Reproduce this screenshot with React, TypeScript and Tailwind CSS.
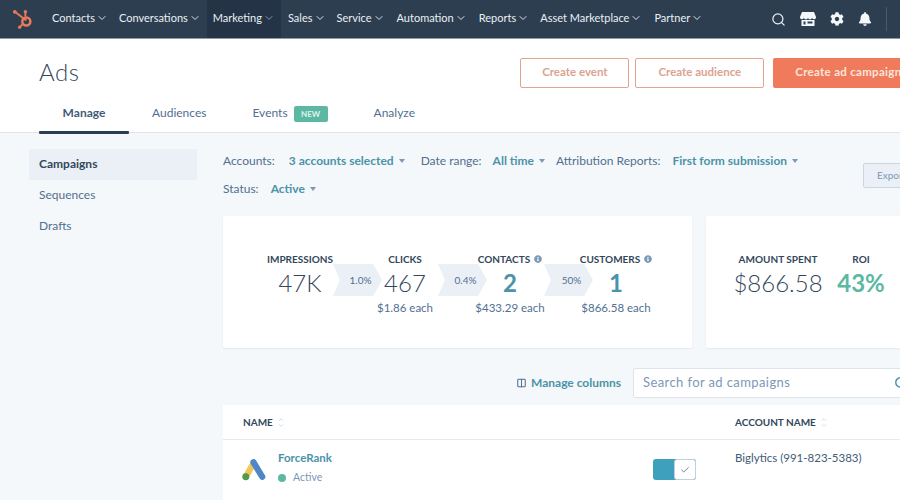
import { ChevronDown, Search, Columns2, Check, ChevronUp } from "lucide-react";
import { FaCog, FaBell, FaInfoCircle } from "react-icons/fa";

const navItems = [
  { label: "Contacts", cls: "pl-[14px]" },
  { label: "Conversations", cls: "pl-[11px]" },
  { label: "Marketing", cls: "ml-[6px] px-[6px] bg-[#243345]", active: true },
  { label: "Sales", cls: "ml-[7px]" },
  { label: "Service", cls: "ml-[11px]" },
  { label: "Automation", cls: "ml-[12px]" },
  { label: "Reports", cls: "ml-[12px]" },
  { label: "Asset Marketplace", cls: "ml-[11px]" },
  { label: "Partner", cls: "ml-[12px]" },
];

function Caret() {
  return <span className="ml-[5px] inline-block border-x-[3.5px] border-t-[4px] border-x-transparent border-t-[#7c98b6]" />;
}

function Filter({ label, value, gap, left }: { label: string; value: string; gap: string; left: string }) {
  return (
    <div className={`flex items-center ${left}`}>
      <span className="text-[#516f90]">{label}</span>
      <span className={`${gap} font-bold text-[#4a93a8]`}>{value}</span>
      <Caret />
    </div>
  );
}

function Metric({ label, value, sub, info, width, tone }: { label: string; value: string; sub?: string; info?: boolean; width: string; tone?: string }) {
  return (
    <div className={`flex flex-col items-center whitespace-nowrap ${width}`}>
      <div className="flex h-[14px] items-center gap-[4px] text-[10px] font-bold text-[#33475b]">
        {label}
        {info && <FaInfoCircle className="h-[8px] w-[8px] text-[#7c98b6]" />}
      </div>
      <div className={`mt-[2px] h-[30px] text-[24px] leading-[30px] ${tone ?? "font-light text-[#33475b]"}`}>{value}</div>
      {sub && <div className="mt-[2px] text-[11.5px] leading-[16px] text-[#516f90]">{sub}</div>}
    </div>
  );
}

function Arrow({ pct, ml }: { pct: string; ml?: string }) {
  return (
    <div className={`mt-[12px] flex h-[32px] w-[49px] shrink-0 items-center justify-center bg-[#eaf0f6] pl-[6px] text-[10px] text-[#516f90] [clip-path:polygon(0_0,82%_0,100%_50%,82%_100%,0_100%,14%_50%)] ${ml ?? ""}`}>
      {pct}
    </div>
  );
}

function SortIcon() {
  return (
    <span className="ml-[4px] flex flex-col text-[#cbd6e2]">
      <ChevronUp className="-mb-[1px] h-[7px] w-[8px]" strokeWidth={3} />
      <ChevronUp className="h-[7px] w-[8px] rotate-180" strokeWidth={3} />
    </span>
  );
}

export default function App() {
  return (
    <div className="flex h-[500px] w-[900px] flex-col overflow-hidden bg-[#f5f8fa] font-['Lato',sans-serif]">
      {/* Top nav */}
      <nav className="flex h-[39px] shrink-0 items-stretch border-b border-[#8b99a8] bg-[#2d3e50] text-[11px] text-[#eaf0f6]">
        <div className="flex w-[38px] shrink-0 items-center pl-[11px]">
          <svg viewBox="0 0 24 24" className="h-[23px] w-[23px]" fill="none">
            <g stroke="#e8795a" strokeWidth="2">
              <path d="M4 4 L16 13" />
              <path d="M15 5 L15 9" />
              <path d="M10 19 L13 16" />
            </g>
            <circle cx="4" cy="4" r="2" fill="#e8795a" />
            <circle cx="15" cy="4" r="1.8" fill="#e8795a" />
            <circle cx="9" cy="20" r="1.7" fill="#e8795a" />
            <circle cx="16" cy="14" r="4.2" stroke="#e8795a" strokeWidth="2.6" />
          </svg>
        </div>
        {navItems.map((item) => (
          <div key={item.label} className={`flex items-center whitespace-nowrap pb-[2px] ${item.cls}`}>
            {item.label}
            <ChevronDown className={`ml-[1px] h-[12px] w-[12px] ${item.active ? "text-[#7c98b6]" : "text-[#dfe3eb]"}`} />
          </div>
        ))}
        <div className="ml-auto flex items-center gap-[14px] pr-[13px]">
          <Search className="h-[15px] w-[15px] text-[#eaf0f6]" strokeWidth={2} />
          <svg viewBox="0 0 16 16" className="h-[16px] w-[16px]" fill="#f5f8fa">
            <path d="M2 1h12l2 5a2 2 0 0 1-4 .4A2 2 0 0 1 8 6.4 2 2 0 0 1 4 6.4 2 2 0 0 1 0 6z" />
            <path fillRule="evenodd" d="M1.5 9h13v6h-13zM3.5 10.5v3h2v-3zM7.5 10.5v2h5v-2z" />
          </svg>
          <FaCog className="h-[14px] w-[14px] text-[#f5f8fa]" />
          <FaBell className="h-[14px] w-[14px] text-[#f5f8fa]" />
          <div className="h-[24px] w-px bg-[#425b76]" />
        </div>
      </nav>

      {/* Page header */}
      <header className="h-[94px] shrink-0 border-b border-[#dfe3eb] bg-white">
        <div className="mt-[19px] flex h-[30px] items-start pl-[39px]">
          <h1 className="-mt-[1px] text-[24px] font-light leading-[30px] tracking-[0.5px] text-[#33475b]">Ads</h1>
          <div className="ml-[441px] flex shrink-0 text-[11.5px] font-bold">
            <button className="h-[30px] w-[109px] rounded-[2px] border border-[#e2a48f] bg-white pb-[2px] text-[#dba391]">Create event</button>
            <button className="ml-[6px] h-[30px] w-[129px] rounded-[2px] border border-[#e2a48f] bg-white pb-[2px] text-[#dba391]">Create audience</button>
            <button className="ml-[9px] h-[30px] w-[150px] shrink-0 rounded-[2px] bg-[#ef7b5c] pb-[2px] tracking-[0.3px] text-[#fde4da]">Create ad campaign</button>
          </div>
        </div>
        <div className="flex items-stretch pl-[39px] pt-[14px] text-[12px] text-[#516f90]">
          <div className="relative h-[32px] w-[90px] pt-[2px] text-center font-bold text-[#425b76]">
            Manage
            <div className="absolute bottom-0 left-0 h-[3px] w-full rounded-[1px] bg-[#2d3e50]" />
          </div>
          <div className="ml-[23px] pt-[2px]">Audiences</div>
          <div className="ml-[46px] pt-[2px]">Events</div>
          <div className="ml-[6px] mt-[4px] flex h-[16px] w-[34px] items-center justify-center rounded-[2px] bg-[#5cb8a3] text-[8px] font-bold text-[#dff3ee]">NEW</div>
          <div className="ml-[46px] pt-[2px]">Analyze</div>
        </div>
      </header>

      <div className="flex min-h-0 flex-1">
        {/* Side menu */}
        <aside className="w-[223px] shrink-0 pl-[29px] pt-[16px] text-[12px] text-[#516f90]">
          <div className="flex h-[31px] w-[168px] items-center bg-[#eaf0f6] pb-[2px] pl-[10px] font-bold text-[#33475b]">Campaigns</div>
          <div className="flex h-[31px] items-center pb-[2px] pl-[10px]">Sequences</div>
          <div className="flex h-[31px] items-center pb-[2px] pl-[10px]">Drafts</div>
        </aside>

        <main className="w-[760px] shrink-0">
          <div className="flex items-start">
            <div className="w-[640px] shrink-0 text-[12px]">
              <div className="flex h-[37px] items-end">
                <Filter label="Accounts:" value="3 accounts selected" gap="ml-[14px]" left="" />
                <Filter label="Date range:" value="All time" gap="ml-[11px]" left="ml-[16px]" />
                <Filter label="Attribution Reports:" value="First form submission" gap="ml-[12px]" left="ml-[11px]" />
              </div>
              <div className="mt-[11px] flex h-[16px] items-center">
                <Filter label="Status:" value="Active" gap="ml-[12px]" left="" />
              </div>
            </div>
            <div className="mt-[30px] flex h-[25px] w-[60px] shrink-0 items-center rounded-[2px] border border-[#cbd6e2] bg-[#eaf0f6] pl-[13px] text-[10px] text-[#7c98b6]">Export</div>
          </div>

          <div className="mt-[19px] flex gap-[14px]">
            <section className="flex h-[132px] w-[469px] shrink-0 items-start rounded-[2px] bg-white pl-[44px] pt-[36px] shadow-[0_1px_2px_rgba(45,62,80,0.08)]">
              <Metric label="IMPRESSIONS" value="47K" width="w-[66px]" />
              <Arrow pct="1.0%" />
              <Metric label="CLICKS" value="467" sub="$1.86 each" width="w-[46px]" />
              <Arrow pct="0.4%" ml="ml-[10px]" />
              <Metric label="CONTACTS" value="2" sub="$433.29 each" info width="w-[46px]" tone="font-bold text-[#4a93a8]" />
              <Arrow pct="50%" ml="ml-[11px]" />
              <Metric label="CUSTOMERS" value="1" sub="$866.58 each" info width="w-[46px]" tone="font-bold text-[#4a93a8]" />
            </section>
            <section className="flex h-[132px] w-[300px] shrink-0 items-start rounded-[2px] bg-white pl-[30px] pt-[36px] shadow-[0_1px_2px_rgba(45,62,80,0.08)]">
              <Metric label="AMOUNT SPENT" value="$866.58" width="w-[84px]" />
              <Metric label="ROI" value="43%" width="w-[50px] ml-[16px]" tone="font-bold text-[#5cb8a3]" />
            </section>
          </div>

          <div className="mt-[20px] flex items-center">
            <div className="ml-[293px] flex w-[117px] items-center text-[12px] font-bold text-[#4a93a8]">
              <Columns2 className="mr-[4px] h-[10px] w-[11px] text-[#516f90]" strokeWidth={2.5} />
              Manage columns
            </div>
            <div className="flex h-[30px] w-[300px] shrink-0 items-center rounded-[2px] border border-[#dfe3eb] bg-white pl-[9px] text-[13px] tracking-[0.4px] text-[#7c98b6]">
              Search for ad campaigns
              <Search className="ml-auto mr-[24px] h-[14px] w-[14px] text-[#4a93a8]" strokeWidth={2.5} />
            </div>
          </div>

          <div className="mt-[7px] h-[95px] bg-white">
            <div className="flex h-[35px] items-center border-b border-[#e5ebf1] pl-[20px] text-[10px] font-bold text-[#33475b]">
              <div className="flex w-[492px] items-center">NAME<SortIcon /></div>
              <div className="flex items-center">ACCOUNT NAME<SortIcon /></div>
            </div>
            <div className="flex items-start pl-[18px] pt-[10px]">
              <svg viewBox="0 0 28 24" className="mt-[8px] h-[24px] w-[27px]" fill="none" strokeLinecap="round">
                <path d="M13 5 L5 19" stroke="#f0c75e" strokeWidth="6.5" />
                <path d="M13 4 L22 19" stroke="#4f86c6" strokeWidth="6.5" />
                <circle cx="5" cy="19" r="3.6" fill="#4f9a4c" />
              </svg>
              <div className="ml-[10px] w-[375px]">
                <div className="text-[11.5px] font-bold leading-[16px] text-[#4a93a8]">ForceRank</div>
                <div className="mt-[4px] flex items-center text-[10.5px] text-[#7c98b6]">
                  <span className="mr-[7px] h-[8px] w-[8px] rounded-full bg-[#5cb8a3]" />
                  Active
                </div>
              </div>
              <div className="mt-[9px] flex h-[21px] w-[43px] rounded-[3px] bg-[#3fa0bd]">
                <div className="ml-[21px] flex h-[21px] w-[22px] items-center justify-center rounded-[3px] border border-[#bfd0de] bg-white">
                  <Check className="h-[10px] w-[10px] text-[#516f90]" />
                </div>
              </div>
              <div className="ml-[39px] text-[11.5px] leading-[16px] text-[#425b76]">Biglytics (991-823-5383)</div>
            </div>
          </div>
        </main>
      </div>
    </div>
  );
}
